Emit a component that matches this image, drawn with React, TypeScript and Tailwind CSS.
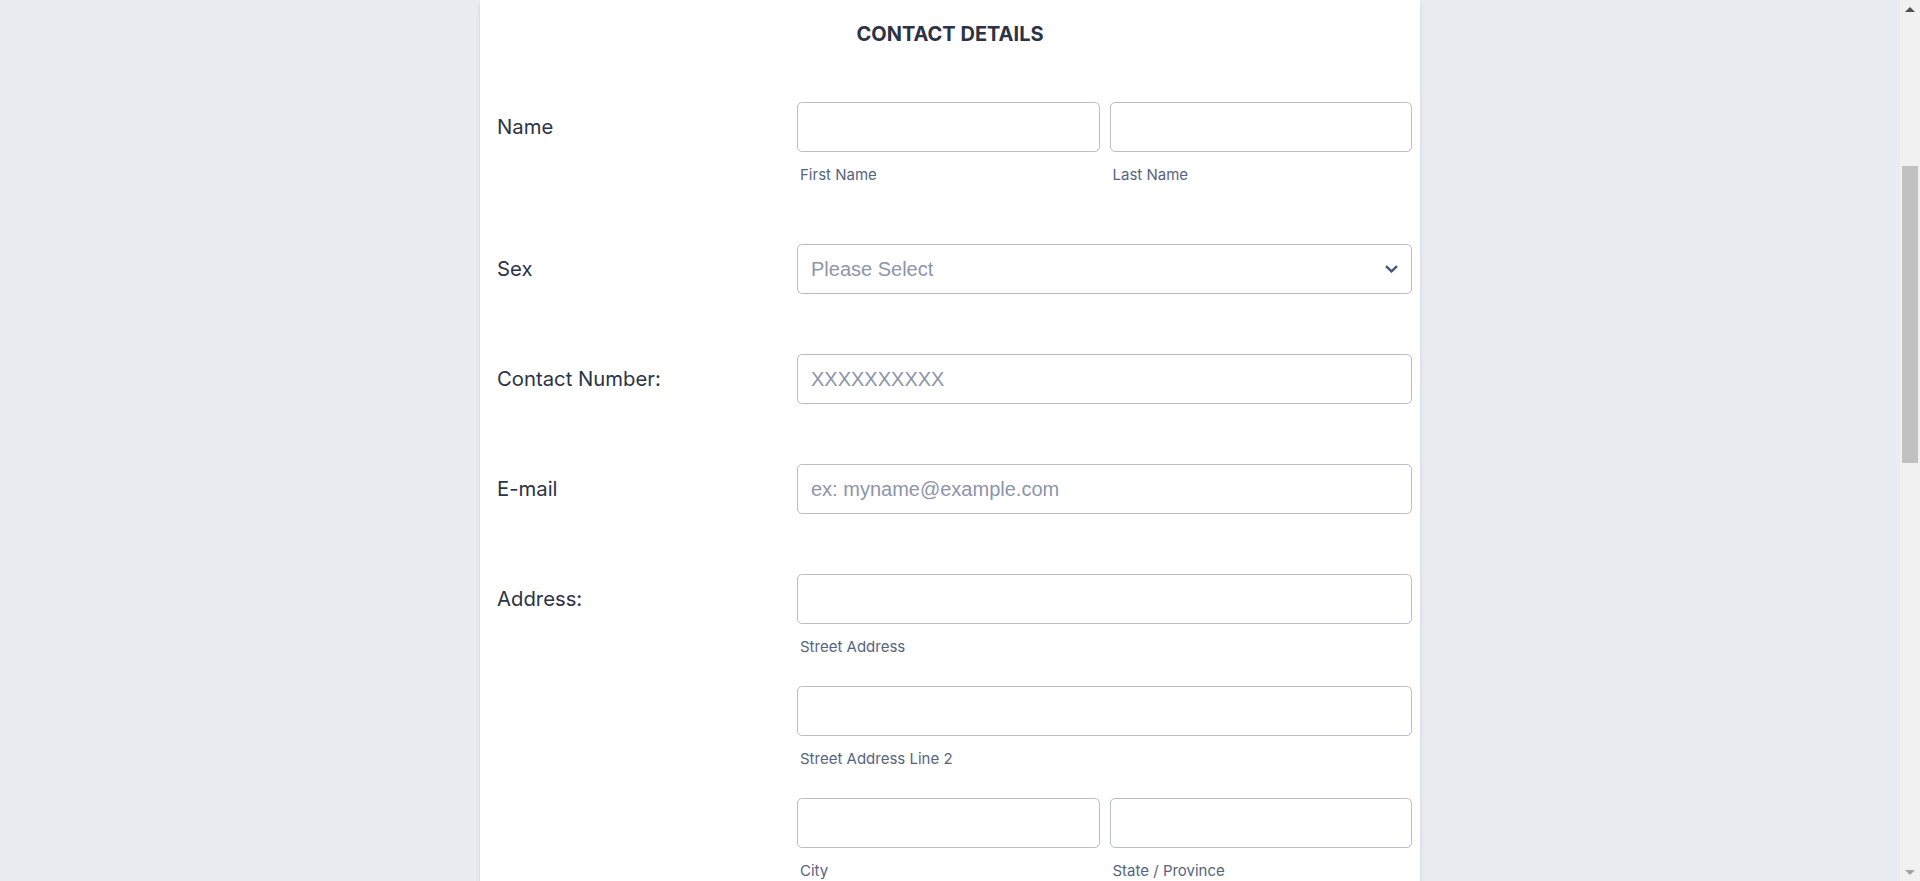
import type { ReactNode } from "react"

const FIELD =
  "h-[50px] w-full rounded-[5px] border border-[#b8bdc9] bg-white px-[13px] font-['Liberation_Sans',Arial,sans-serif] text-[20px] text-[#2c3345] outline-none placeholder:text-[#8d95aa]"

function SubLabel({ children }: { children: ReactNode }) {
  return <span className="mt-[13px] block pl-[3px] text-[15px] leading-5 text-[#57647e]">{children}</span>
}

function Row({ label, className, children }: { label: string; className?: string; children: ReactNode }) {
  return (
    <div className={"flex " + (className ?? "")}>
      <div className="flex h-[50px] w-[300px] shrink-0 items-center text-[20.3px] text-[#2c3345]">{label}</div>
      <div className="flex-1">{children}</div>
    </div>
  )
}

function Field({ placeholder, sub }: { placeholder?: string; sub?: string }) {
  return (
    <label className="block flex-1">
      <input className={FIELD} placeholder={placeholder} />
      {sub && <SubLabel>{sub}</SubLabel>}
    </label>
  )
}

// browser scrollbar, page is scrolled down to the contact section
function Scrollbar() {
  return (
    <div className="flex w-[20px] shrink-0 flex-col items-center bg-[#f1f1f1]">
      <div className="flex h-[17px] w-full items-center justify-center">
        <svg width="10" height="6" viewBox="0 0 10 6">
          <path d="M0 6 5 1l5 5z" fill="#505050" />
        </svg>
      </div>
      <div className="h-[149px]" />
      <div className="h-[297px] w-[16px] bg-[#c1c1c1]" />
      <div className="flex-1" />
      <div className="flex h-[17px] w-full items-center justify-center">
        <svg width="10" height="6" viewBox="0 0 10 6">
          <path d="M0 0 5 5l5-5z" fill="#a3a3a3" />
        </svg>
      </div>
    </div>
  )
}

export default function App() {
  return (
    <div className="flex h-screen overflow-hidden bg-[#ebecf2] font-['Inter',sans-serif]">
      <main className="flex-1 overflow-hidden">
        <div className="mx-auto w-[940px] bg-white pt-5 pb-[60px] pl-[17px] pr-2 shadow-[0_4px_4px_rgba(87,100,126,0.21)]">
          <h2 className="pr-[9px] text-center text-[20px] leading-7 font-bold text-[#2c3345]">CONTACT DETAILS</h2>

          <Row label="Name" className="mt-[54px]">
            <div className="flex gap-[10px]">
              <Field sub="First Name" />
              <Field sub="Last Name" />
            </div>
          </Row>

          <Row label="Sex" className="mt-[59px]">
            <button
              type="button"
              className="flex h-[50px] w-full items-center justify-between rounded-[5px] border border-[#b8bdc9] bg-white px-[13px] font-['Liberation_Sans',Arial,sans-serif] text-[20px] text-[#8d95aa]"
            >
              <span>Please Select</span>
              <svg width="13" height="8" viewBox="0 0 13 8" fill="none">
                <path d="M1 1.2 6.5 6.4 12 1.2" stroke="#4b5574" strokeWidth="2.4" />
              </svg>
            </button>
          </Row>

          <Row label="Contact Number:" className="mt-[60px]">
            <Field placeholder="XXXXXXXXXX" />
          </Row>

          <Row label="E-mail" className="mt-[60px]">
            <Field placeholder="ex: myname@example.com" />
          </Row>

          <Row label="Address:" className="mt-[60px]">
            <div className="flex flex-col gap-[29px]">
              <Field sub="Street Address" />
              <Field sub="Street Address Line 2" />
              <div className="flex gap-[10px]">
                <Field sub="City" />
                <Field sub="State / Province" />
              </div>
            </div>
          </Row>
        </div>
      </main>
      <Scrollbar />
    </div>
  )
}
